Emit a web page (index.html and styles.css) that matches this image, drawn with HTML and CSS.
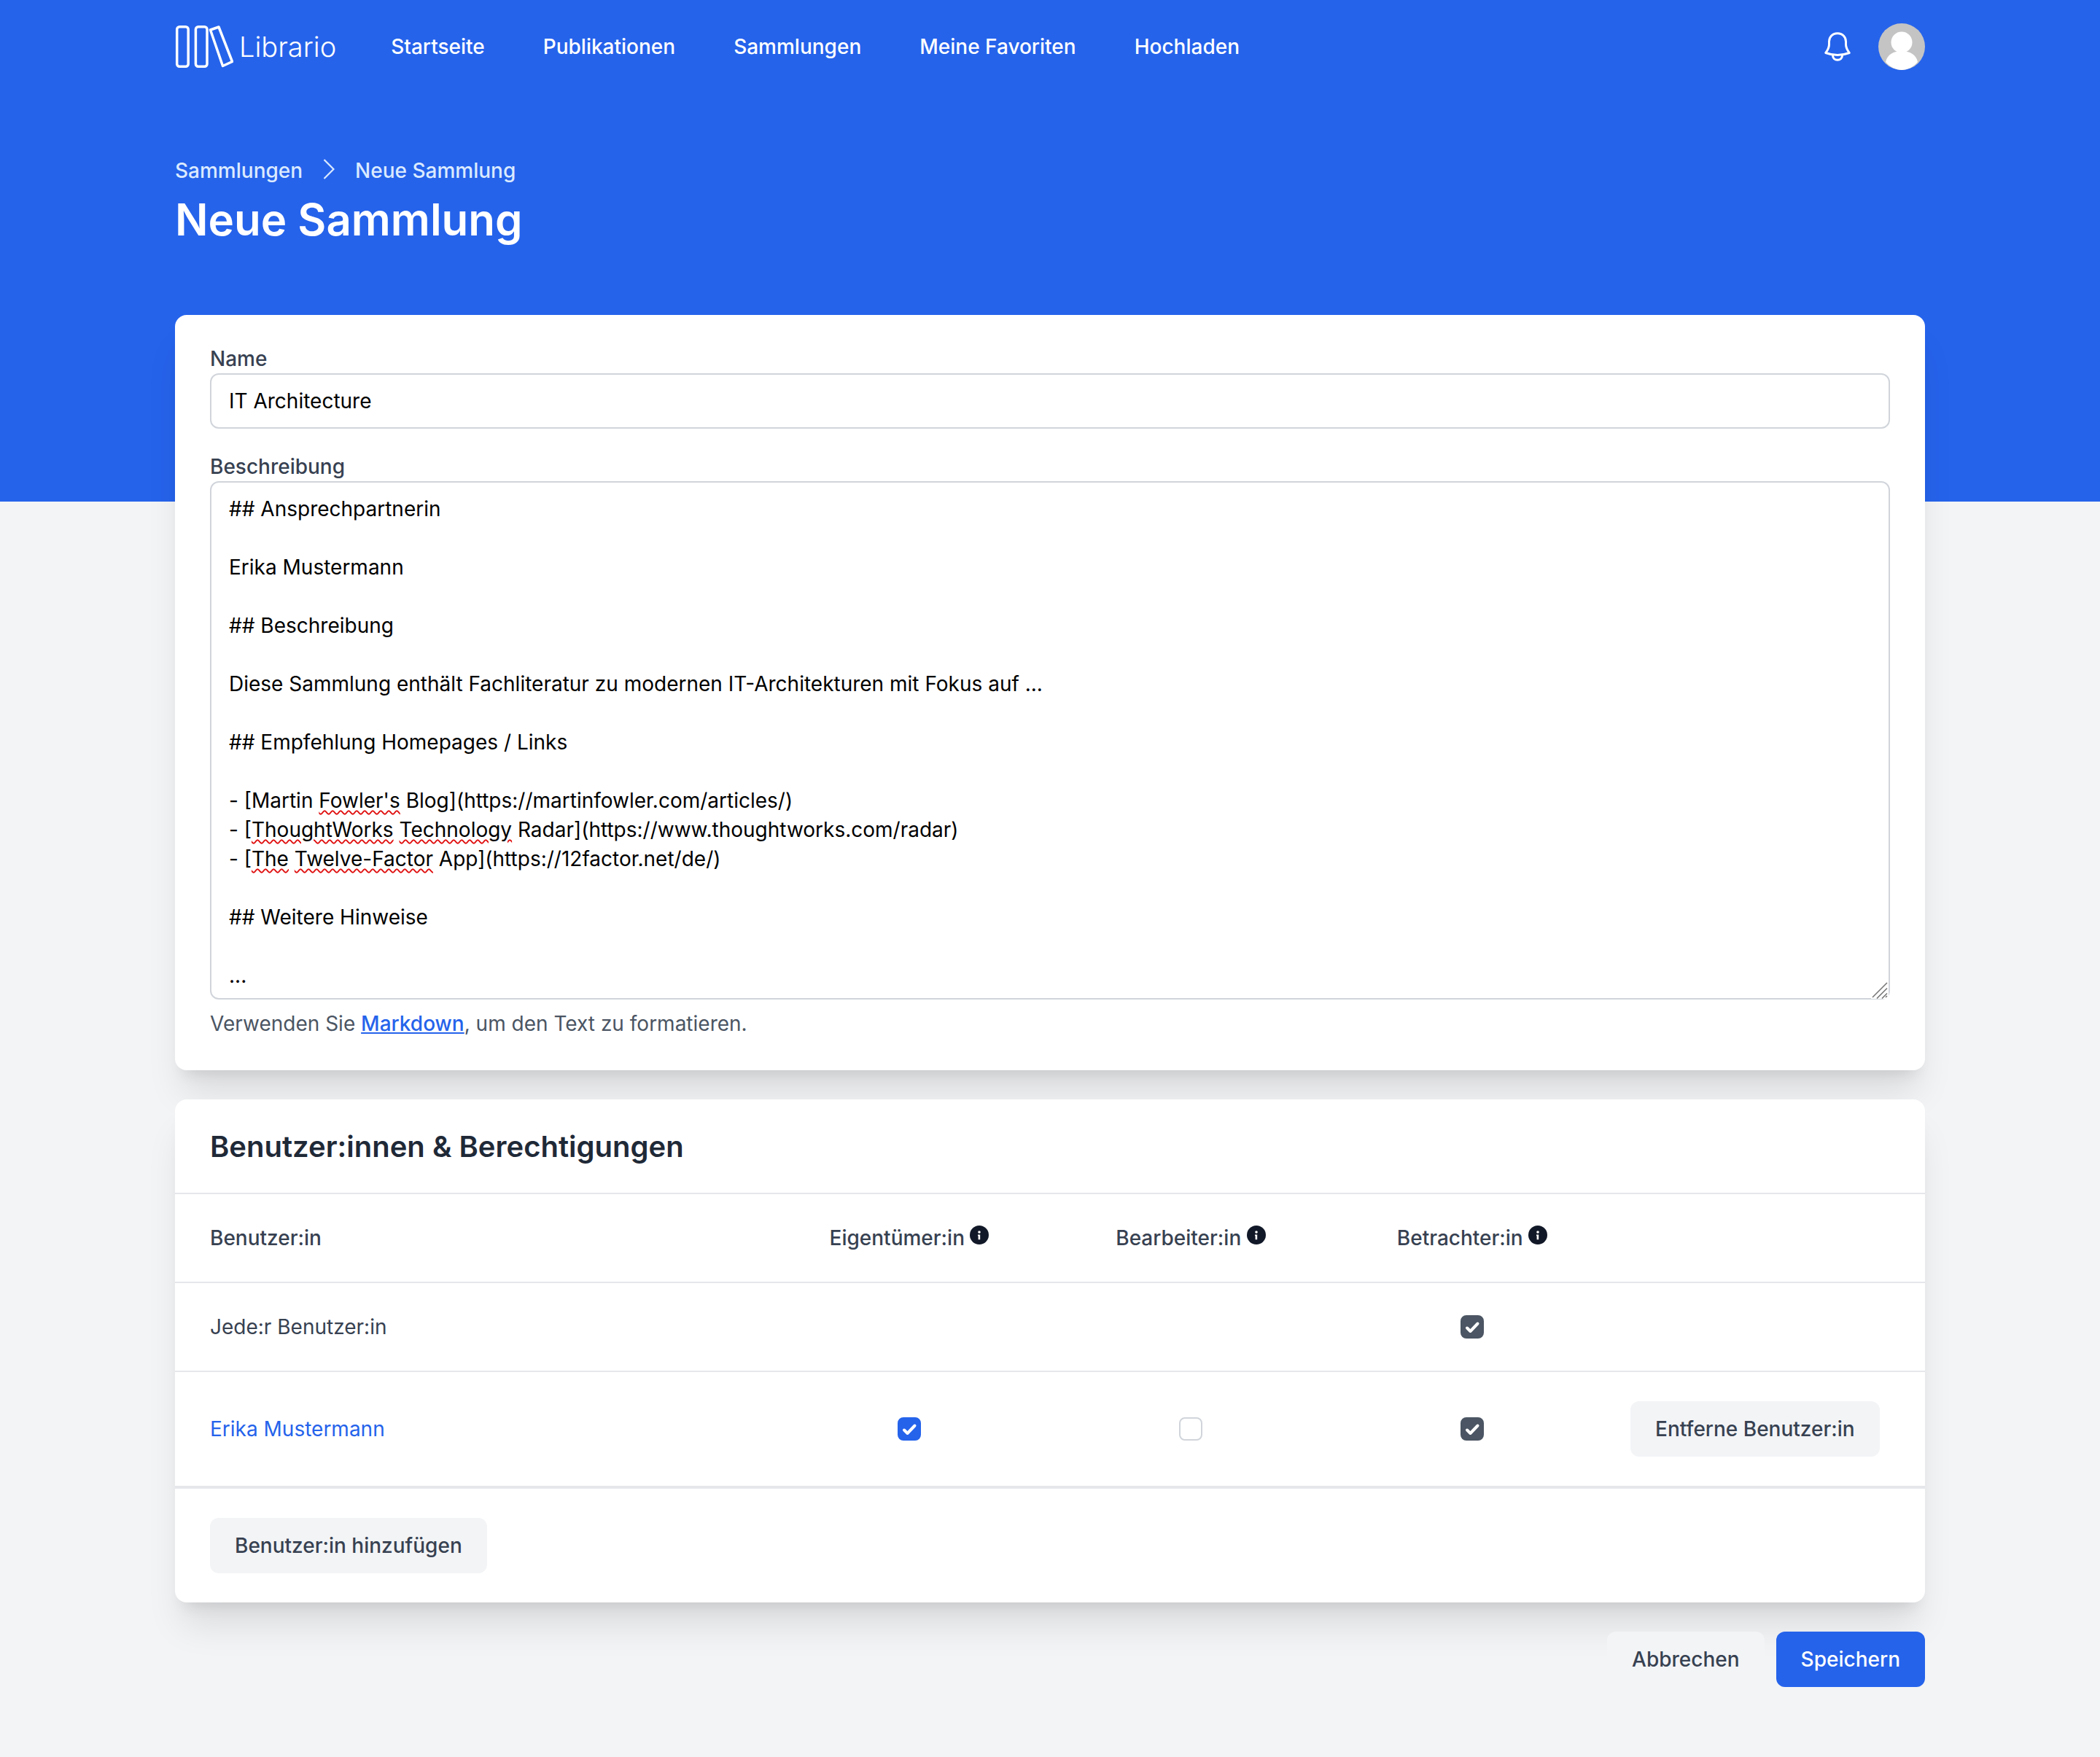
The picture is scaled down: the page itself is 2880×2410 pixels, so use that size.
FILE: index.html
```html
<!DOCTYPE html>
<html lang="de">
<head>
    <meta charset="UTF-8">
    <meta name="viewport" content="width=device-width, initial-scale=1.0">
    <title>Neue Sammlung</title>
    <link rel="stylesheet" href="styles.css">
</head>
<body>
    <header class="hero">
        <nav class="navbar">
            <a class="brand" href="#">
                <svg class="brand-logo" viewBox="0 0 80 58" fill="none" stroke="#fff" stroke-width="3.500" stroke-linejoin="round">
                    <rect x="2.700" y="1.800" width="15.500" height="54.400" rx="3.500"/>
                    <rect x="28.400" y="1.800" width="15.600" height="54.400" rx="3.500"/>
                    <path d="M48.500 6 L60 2 L78.500 49.500 L65.500 55.500 Z"/>
                </svg>
                <span class="brand-name">Librario</span>
            </a>
            <ul class="nav-links">
                <li><a href="#">Startseite</a></li>
                <li><a href="#">Publikationen</a></li>
                <li><a href="#">Sammlungen</a></li>
                <li><a href="#">Meine Favoriten</a></li>
                <li><a href="#">Hochladen</a></li>
            </ul>
            <div class="nav-user">
                <svg class="bell" viewBox="0 0 36 40" fill="none" stroke="#fff" stroke-width="3" stroke-linejoin="round" stroke-linecap="round">
                    <path d="M18 1.800 C10.500 1.800 6.500 7.500 6.500 13 L6.500 17 C6.500 22 4 25.500 1.800 28.500 C7 30.500 12 31.500 18 31.500 C24 31.500 29 30.500 34.200 28.500 C32 25.500 29.500 22 29.500 17 L29.500 13 C29.500 7.500 25.500 1.800 18 1.800 Z"/>
                    <path d="M11.500 32 C11.500 36 14.500 38.200 18 38.200 C21.500 38.200 24.500 36 24.500 32"/>
                </svg>
                <svg class="avatar" viewBox="0 0 64 64">
                    <circle cx="32" cy="32" r="32" fill="#c4c4c4"/>
                    <circle cx="32" cy="26" r="14.500" fill="#fff"/>
                    <path d="M10 53 C12 43 21 38 32 38 C43 38 52 43 54 53 C48 60 40 64 32 64 C24 64 16 60 10 53 Z" fill="#fff"/>
                </svg>
            </div>
        </nav>
        <div class="page-head">
            <div class="breadcrumb">
                <a href="#">Sammlungen</a>
                <svg class="chevron" viewBox="0 0 16 28" fill="none" stroke="#dbeafe" stroke-width="2.200">
                    <path d="M1.500 1 L14.500 14 L1.500 27"/>
                </svg>
                <span>Neue Sammlung</span>
            </div>
            <h1>Neue Sammlung</h1>
        </div>
    </header>

    <main class="content">
        <section class="card form-card">
            <label class="field-label">Name</label>
            <div class="input">IT Architecture</div>

            <label class="field-label label-second">Beschreibung</label>
            <div class="textarea-wrap">
                <div class="input textarea">## Ansprechpartnerin

Erika Mustermann

## Beschreibung

Diese Sammlung enthält Fachliteratur zu modernen IT-Architekturen mit Fokus auf ...

## Empfehlung Homepages / Links

- [Martin <span class="typo">Fowler's</span> Blog](https://martinfowler.com/articles/)
- [<span class="typo">ThoughtWorks</span> <span class="typo">Technology</span> Radar](https://www.thoughtworks.com/radar)
- [<span class="typo">The</span> <span class="typo">Twelve-Factor</span> App](https://12factor.net/de/)

## Weitere Hinweise

...</div>
                <!-- resize handle -->
                <svg class="resizer" viewBox="0 0 24 24" fill="none" stroke="#777" stroke-width="1.600">
                    <path d="M2 22 L22 2 M8 23.500 L22 9.500 M15 23.500 L22 16.500 M20 22 L22 20"/>
                </svg>
            </div>
            <p class="hint">Verwenden Sie <a href="#">Markdown</a>, um den Text zu formatieren.</p>
        </section>

        <section class="card users-card">
            <h2>Benutzer:innen &amp; Berechtigungen</h2>
            <table class="users">
                <colgroup>
                    <col class="col-name">
                    <col class="col-role">
                    <col class="col-role">
                    <col class="col-role">
                    <col>
                </colgroup>
                <thead>
                    <tr>
                        <th class="cell-name">Benutzer:in</th>
                        <th>Eigentümer:in <svg class="info" viewBox="0 0 26 26"><circle cx="13" cy="13" r="13" fill="#111827"/><circle cx="13" cy="9" r="1.800" fill="#fff"/><path d="M11 12.500h3.200v6.800h-2.600v-5h-.6z" fill="#fff"/></svg></th>
                        <th>Bearbeiter:in <svg class="info" viewBox="0 0 26 26"><circle cx="13" cy="13" r="13" fill="#111827"/><circle cx="13" cy="9" r="1.800" fill="#fff"/><path d="M11 12.500h3.200v6.800h-2.600v-5h-.6z" fill="#fff"/></svg></th>
                        <th>Betrachter:in <svg class="info" viewBox="0 0 26 26"><circle cx="13" cy="13" r="13" fill="#111827"/><circle cx="13" cy="9" r="1.800" fill="#fff"/><path d="M11 12.500h3.200v6.800h-2.600v-5h-.6z" fill="#fff"/></svg></th>
                        <th></th>
                    </tr>
                </thead>
                <tbody>
                    <tr>
                        <td class="cell-name">Jede:r Benutzer:in</td>
                        <td></td>
                        <td></td>
                        <td><span class="check check-dark"><svg viewBox="0 0 32 32" fill="none" stroke="#fff" stroke-width="4" stroke-linecap="round" stroke-linejoin="round"><path d="M9 17.500 L13.500 22 L23.500 11.500"/></svg></span></td>
                        <td></td>
                    </tr>
                    <tr class="row-last">
                        <td class="cell-name"><a href="#">Erika Mustermann</a></td>
                        <td><span class="check check-blue"><svg viewBox="0 0 32 32" fill="none" stroke="#fff" stroke-width="4" stroke-linecap="round" stroke-linejoin="round"><path d="M9 17.500 L13.500 22 L23.500 11.500"/></svg></span></td>
                        <td><span class="check"></span></td>
                        <td><span class="check check-dark"><svg viewBox="0 0 32 32" fill="none" stroke="#fff" stroke-width="4" stroke-linecap="round" stroke-linejoin="round"><path d="M9 17.500 L13.500 22 L23.500 11.500"/></svg></span></td>
                        <td class="cell-action"><button class="btn">Entferne Benutzer:in</button></td>
                    </tr>
                </tbody>
            </table>
            <div class="users-foot">
                <button class="btn">Benutzer:in hinzufügen</button>
            </div>
        </section>

        <div class="actions">
            <button class="btn">Abbrechen</button>
            <button class="btn btn-primary">Speichern</button>
        </div>
    </main>
</body>
</html>
```

FILE: styles.css
```css
:root {
  --clr-blue: #2563eb;
  --clr-page: #f3f4f6;
  --clr-line: #e5e7eb;
  --clr-border: #d1d5db;
  --clr-text: #374151;
}

*,
::after,
::before {
  margin: 0;
  padding: 0;
  box-sizing: border-box;
}

body {
  background: var(--clr-page);
  font-family: Inter, "Noto Sans", sans-serif;
  font-size: 28px;
  line-height: 40px;
  color: var(--clr-text);
}

a {
  color: inherit;
  text-decoration: none;
}

.hero {
  background: var(--clr-blue);
  color: #fff;
  height: 688px;
  padding: 0 240px;
}

.navbar {
  display: flex;
  align-items: center;
  height: 128px;
}

.brand {
  display: flex;
  align-items: center;
  gap: 8px;
}

.brand-logo {
  width: 80px;
  height: 58px;
  display: block;
}

.brand-name {
  font-size: 38px;
  font-weight: 300;
}

.nav-links {
  display: flex;
  gap: 80px;
  list-style: none;
  margin-left: 75px;
  font-weight: 500;
}

.nav-user {
  display: flex;
  align-items: center;
  gap: 38px;
  margin-left: auto;
}

.bell {
  width: 36px;
  height: 40px;
  display: block;
}

.avatar {
  width: 64px;
  height: 64px;
  display: block;
}

.page-head {
  padding-top: 86px;
}

.breadcrumb {
  display: flex;
  align-items: center;
  gap: 28px;
  color: #dbeafe;
  font-weight: 500;
}

.chevron {
  width: 16px;
  height: 28px;
  margin-top: -4px;
}

.page-head h1 {
  font-size: 60px;
  line-height: 72px;
  font-weight: 600;
  margin-top: 11px;
}

.content {
  width: 2400px;
  margin: -256px auto 0;
  padding-bottom: 96px;
}

.card {
  background: #fff;
  border-radius: 16px;
  box-shadow: 0 40px 50px -10px rgba(0, 0, 0, 0.1), 0 16px 20px -12px rgba(0, 0, 0, 0.1);
}

.form-card {
  padding: 40px 48px 44px;
}

.field-label {
  display: block;
  font-weight: 500;
}

.label-second {
  margin-top: 32px;
}

.input {
  border: 2px solid var(--clr-border);
  border-radius: 12px;
  padding: 16px 24px;
  color: #000;
}

.textarea-wrap {
  position: relative;
}

.textarea {
  white-space: pre-wrap;
  height: 711px;
  overflow: hidden;
}

.resizer {
  position: absolute;
  right: 2px;
  bottom: 1px;
  width: 24px;
  height: 24px;
  background: #fff;
}

.typo {
  text-decoration: underline wavy #e01010 2px;
  text-underline-offset: 3px;
}

.hint {
  color: #4b5563;
  margin-top: 13px;
}

.hint a {
  color: var(--clr-blue);
  font-weight: 500;
  text-decoration: underline;
}

.users-card {
  margin-top: 40px;
}

.users-card h2 {
  font-size: 40px;
  line-height: 56px;
  font-weight: 600;
  color: #1f2937;
  padding: 37px 48px 35px;
}

.users {
  width: 100%;
  border-collapse: separate;
  border-spacing: 0;
  table-layout: fixed;
  border-top: 2px solid var(--clr-line);
}

.col-name {
  width: 814px;
}

.col-role {
  width: 386px;
}

.users th,
.users td {
  text-align: center;
  font-weight: 400;
  height: 122px;
  border-bottom: 2px solid var(--clr-line);
}

.users th {
  font-weight: 500;
  white-space: nowrap;
}

.users th.cell-name,
.users td.cell-name {
  text-align: left;
  padding-left: 48px;
}

.cell-name a {
  color: var(--clr-blue);
}

.users .row-last td {
  height: 160px;
  border-bottom: 4px solid var(--clr-line);
}

.users td.cell-action {
  text-align: left;
  padding-left: 24px;
}

.info {
  width: 26px;
  height: 26px;
  vertical-align: 1px;
}

.check {
  display: block;
  width: 32px;
  height: 32px;
  margin: 0 auto;
  border: 2px solid var(--clr-border);
  border-radius: 8px;
}

.check svg {
  display: block;
  width: 32px;
  height: 32px;
  margin: -2px;
}

.check-dark {
  background: #4b5563;
  border-color: #4b5563;
}

.check-blue {
  background: var(--clr-blue);
  border-color: var(--clr-blue);
}

.users-foot {
  padding: 40px 48px;
}

.btn {
  font: inherit;
  font-weight: 500;
  color: var(--clr-text);
  background: var(--clr-page);
  border: 2px solid transparent;
  border-radius: 12px;
  padding: 16px 32px;
  white-space: nowrap;
}

.btn-primary {
  background: var(--clr-blue);
  color: #fff;
}

.actions {
  display: flex;
  justify-content: flex-end;
  gap: 16px;
  margin-top: 40px;
}
```
